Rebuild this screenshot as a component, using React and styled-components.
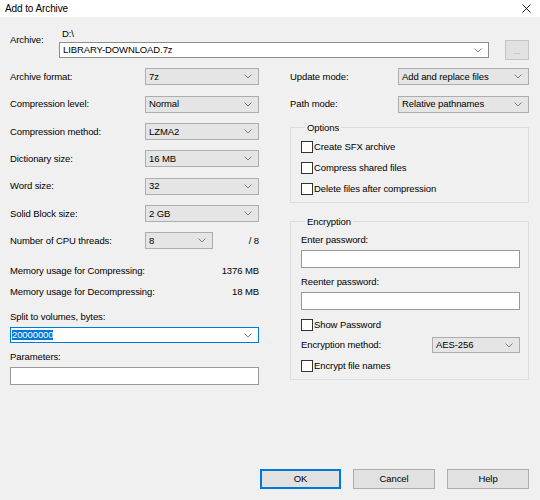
import React from 'react';
import styled, { createGlobalStyle } from 'styled-components';

const GlobalStyle = createGlobalStyle`
  * { box-sizing: border-box; }
  html, body { margin: 0; padding: 0; }
  body {
    font-family: "Liberation Sans", Arial, sans-serif;
    font-size: 9.5px;
    letter-spacing: -0.1px;
    color: #000;
  }
`;

const Window = styled.div`
  width: 540px;
  height: 500px;
  display: flex;
  flex-direction: column;
  background: #f0f0f0;
  overflow: hidden;
`;

const TitleBar = styled.div`
  height: 17px;
  flex: none;
  background: #fff;
  display: flex;
  align-items: center;
  justify-content: space-between;
  padding: 0 9px 0 5px;
  font-size: 10px;
  letter-spacing: -0.1px;
`;

const Body = styled.div`
  flex: 1;
  display: flex;
  flex-direction: column;
  padding: 11px 11px 11px 10px;
`;

const ArchiveRow = styled.div`
  display: flex;
  align-items: flex-start;
`;

const ArchiveLabel = styled.div`
  width: 49px;
  margin-top: 6px;
  line-height: 12px;
`;

const PathCol = styled.div`
  flex: 1;
  display: flex;
  flex-direction: column;
  gap: 2px;
`;

const PathText = styled.div`
  padding-left: 3px;
  line-height: 12px;
`;

const SmallButton = styled.div`
  width: 24px;
  height: 20px;
  margin: 12px 0 0 16px;
  background: #e1e1e1;
  border: 1px solid #c4c4c4;
  color: #9a9a9a;
  display: flex;
  align-items: center;
  justify-content: center;
  font-size: 8px;
  line-height: 8px;
  padding-top: 3px;
`;

const Columns = styled.div`
  display: grid;
  grid-template-columns: 249px 239px;
  column-gap: 31px;
  margin-top: 3.3px;
`;

const Col = styled.div`
  display: flex;
  flex-direction: column;
`;

const FieldRow = styled.div`
  display: flex;
  align-items: center;
  height: ${(p) => p.$h || '27.33px'};
`;

const Label = styled.div`
  width: ${(p) => p.$w || 'auto'};
  flex: ${(p) => (p.$w ? 'none' : '1')};
  line-height: 12px;
  white-space: nowrap;
`;

const comboTones = {
  gray: { bg: '#e5e5e5', border: '#adadad' },
  white: { bg: '#fff', border: '#8c8c8c' },
  focus: { bg: '#fff', border: '#0078d7' },
};

const Combo = styled.div`
  width: ${(p) => p.$w || '100%'};
  height: ${(p) => p.$h || '17px'};
  margin-top: ${(p) => p.$top || '0'};
  flex: none;
  display: flex;
  align-items: center;
  justify-content: space-between;
  padding: 0 6px 0 3px;
  background: ${(p) => comboTones[p.$tone || 'gray'].bg};
  border: 1px solid ${(p) => comboTones[p.$tone || 'gray'].border};
  line-height: 12px;
  white-space: nowrap;
`;

const Selected = styled.span`
  background: #0078d7;
  color: #fff;
  line-height: 10px;
  margin-left: -2px;
`;

const Suffix = styled.div`
  flex: 1;
  text-align: right;
  line-height: 12px;
`;

const InfoRow = styled.div`
  display: flex;
  justify-content: space-between;
  align-items: center;
  height: 21px;
  line-height: 12px;
  margin-top: ${(p) => p.$top || '0'};
`;

const Caption = styled.div`
  line-height: 12px;
  margin-top: ${(p) => p.$top || '8px'};
`;

const TextBox = styled.div`
  height: ${(p) => p.$h || '18px'};
  margin-top: 4px;
  background: #fff;
  border: 1px solid #999;
`;

const Group = styled.fieldset`
  margin: ${(p) => p.$top || '4px'} 0 0;
  padding: ${(p) => p.$pad};
  border: 1px solid #dcdcdc;
  min-width: 0;
  display: flex;
  flex-direction: column;
`;

const Legend = styled.legend`
  padding: 0 2px;
  margin-left: 4px;
  line-height: 12px;
`;

const CheckRow = styled.div`
  display: flex;
  align-items: center;
  gap: 1px;
  height: ${(p) => p.$h || '21px'};
  margin-top: ${(p) => p.$top || '0'};
  line-height: 12px;
`;

const Box = styled.span`
  width: 12px;
  height: 12px;
  background: #fff;
  border: 1px solid #333;
  flex: none;
`;

const Footer = styled.div`
  margin-top: auto;
  display: flex;
  justify-content: flex-end;
  gap: 12px;
`;

const Button = styled.div`
  width: ${(p) => (p.$primary ? '81px' : '82px')};
  height: 20px;
  display: flex;
  align-items: center;
  justify-content: center;
  background: #e1e1e1;
  border: 1px solid ${(p) => (p.$primary ? '#0078d7' : '#adadad')};
  box-shadow: ${(p) => (p.$primary ? 'inset 0 0 0 1px #0078d7' : 'none')};
  line-height: 12px;
`;

const Chevron = () => (
  <svg width="8" height="5" viewBox="0 0 8 5">
    <path d="M0.5 0.5 L4 4 L7.5 0.5" fill="none" stroke="#707070" strokeWidth="0.9" />
  </svg>
);

const Close = () => (
  <svg width="9" height="9" viewBox="0 0 9 9">
    <path d="M0.5 0.5 L8.5 8.5 M8.5 0.5 L0.5 8.5" stroke="#000" strokeWidth="0.9" />
  </svg>
);

const Select = ({ children, ...rest }) => (
  <Combo {...rest}>
    <span>{children}</span>
    <Chevron />
  </Combo>
);

const Check = ({ children, ...rest }) => (
  <CheckRow {...rest}>
    <Box />
    <span>{children}</span>
  </CheckRow>
);

const leftFields = [
  ['Archive format:', '7z'],
  ['Compression level:', 'Normal'],
  ['Compression method:', 'LZMA2'],
  ['Dictionary size:', '16 MB'],
  ['Word size:', '32'],
  ['Solid Block size:', '2 GB'],
];

export default function App() {
  return (
    <Window>
      <GlobalStyle />
      <TitleBar>
        <span>Add to Archive</span>
        <Close />
      </TitleBar>
      <Body>
        <ArchiveRow>
          <ArchiveLabel>Archive:</ArchiveLabel>
          <PathCol>
            <PathText>D:\</PathText>
            <Select $tone="white" $h="16px">LIBRARY-DOWNLOAD.7z</Select>
          </PathCol>
          <SmallButton>...</SmallButton>
        </ArchiveRow>

        <Columns>
          <Col>
            {leftFields.map(([label, value]) => (
              <FieldRow key={label}>
                <Label $w="135px">{label}</Label>
                <Select $w="114px">{value}</Select>
              </FieldRow>
            ))}
            <FieldRow>
              <Label $w="135px">Number of CPU threads:</Label>
              <Select $w="68px">8</Select>
              <Suffix>/ 8</Suffix>
            </FieldRow>
            <InfoRow $top="6px">
              <span>Memory usage for Compressing:</span>
              <span>1376 MB</span>
            </InfoRow>
            <InfoRow>
              <span>Memory usage for Decompressing:</span>
              <span>18 MB</span>
            </InfoRow>
            <Caption $top="8.5px">Split to volumes, bytes:</Caption>
            <Combo $tone="focus" $h="16px" $top="4px">
              <Selected>20000000</Selected>
              <Chevron />
            </Combo>
            <Caption>Parameters:</Caption>
            <TextBox />
          </Col>

          <Col>
            <FieldRow>
              <Label $w="108px">Update mode:</Label>
              <Select $w="131px">Add and replace files</Select>
            </FieldRow>
            <FieldRow>
              <Label $w="108px">Path mode:</Label>
              <Select $w="131px">Relative pathnames</Select>
            </FieldRow>

            <Group $pad="2.5px 8px 3px 10px">
              <Legend>Options</Legend>
              <Check>Create SFX archive</Check>
              <Check>Compress shared files</Check>
              <Check>Delete files after compression</Check>
            </Group>

            <Group $top="12.5px" $pad="6px 8px 2px 10px">
              <Legend>Encryption</Legend>
              <Caption $top="0">Enter password:</Caption>
              <TextBox />
              <Caption>Reenter password:</Caption>
              <TextBox />
              <Check $h="20px" $top="5.5px">Show Password</Check>
              <FieldRow $h="20px">
                <Label>Encryption method:</Label>
                <Select $w="88px" $h="16px">AES-256</Select>
              </FieldRow>
              <Check $h="22px">Encrypt file names</Check>
            </Group>
          </Col>
        </Columns>

        <Footer>
          <Button $primary>OK</Button>
          <Button>Cancel</Button>
          <Button>Help</Button>
        </Footer>
      </Body>
    </Window>
  );
}
